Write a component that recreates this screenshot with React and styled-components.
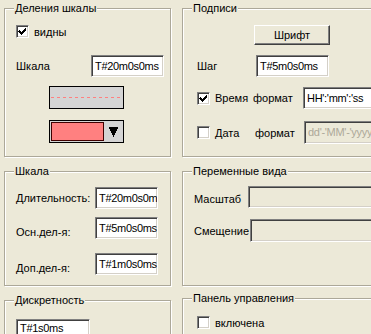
import React from "react";
import styled, { createGlobalStyle } from "styled-components";

const BG = "#ECE9D8";

const GlobalStyle = createGlobalStyle`
  html, body { margin: 0; padding: 0; background: ${BG}; }
  body {
    font-family: "Liberation Sans", Arial, sans-serif;
    font-size: 11px;
    color: #000;
    overflow: hidden;
  }
`;

const Page = styled.div`
  width: 371px;
  height: 334px;
  overflow: hidden;
  box-sizing: border-box;
  padding: 8px 0 0 4px;
  display: grid;
  grid-template-columns: 167px 200px;
  column-gap: 11px;
  align-items: start;
`;

const Column = styled.div`
  display: flex;
  flex-direction: column;
`;

const Group = styled.section`
  position: relative;
  box-sizing: border-box;
  height: ${(p) => p.$h}px;
  margin-top: ${(p) => p.$mt || 0}px;
  border: 1px solid #aca899;
  box-shadow: inset 1px 1px 0 #fff, 1px 1px 0 #fff;
  padding: ${(p) => p.$pad};
  display: flex;
  flex-direction: column;
  align-items: flex-start;
`;

const Title = styled.span`
  position: absolute;
  top: -8px;
  left: 9px;
  padding: 0 1px;
  background: ${BG};
  line-height: 15px;
  white-space: nowrap;
`;

const Row = styled.div`
  display: flex;
  align-items: ${(p) => p.$align || "center"};
  margin-top: ${(p) => p.$mt || 0}px;
  height: ${(p) => (p.$h ? `${p.$h}px` : "auto")};
`;

const Label = styled.span`
  display: inline-block;
  width: ${(p) => (p.$w ? `${p.$w}px` : "auto")};
  margin-top: ${(p) => p.$dy || 0}px;
  white-space: nowrap;
  flex: none;
`;

const Input = styled.div`
  box-sizing: border-box;
  width: ${(p) => p.$w}px;
  height: ${(p) => p.$h || 22}px;
  flex: none;
  border: 1px solid;
  border-color: #808080 #fff #fff #808080;
  box-shadow: inset 1px 1px 0 #404040, inset -1px -1px 0 #d4d0c8;
  background: ${(p) => (p.$disabled ? BG : "#fff")};
  color: ${(p) => (p.$muted ? "#aca899" : "#000")};
  font-size: 11px;
  letter-spacing: -0.3px;
  line-height: 16px;
  padding: ${(p) => p.$pt ?? 2}px 0 0 3px;
  white-space: nowrap;
  overflow: hidden;
`;

const CheckWrap = styled.span`
  display: flex;
  align-items: center;
  flex: none;
  width: ${(p) => (p.$w ? `${p.$w}px` : "auto")};
`;

const CheckBoxBox = styled.span`
  box-sizing: border-box;
  width: 13px;
  height: 13px;
  flex: none;
  border: 1px solid;
  border-color: #808080 #fff #fff #808080;
  box-shadow: inset 1px 1px 0 #404040, inset -1px -1px 0 #d4d0c8;
  background: #fff;
  display: flex;
  align-items: center;
  justify-content: center;
`;

const CheckText = styled.span`
  margin-left: 5px;
  white-space: nowrap;
`;

const Check = ({ checked, w, children }) => (
  <CheckWrap $w={w}>
    <CheckBoxBox>
      {checked && (
        <svg width="9" height="9" viewBox="0 0 9 9" shapeRendering="crispEdges">
          <path
            d="M1 3h1v1h1v1h1v-1h1v-1h1v-1h1v-1h1v3h-1v1h-1v1h-1v1h-1v1h-1v-1h-1v-1h-1v-1h-1z"
            fill="#000"
          />
        </svg>
      )}
    </CheckBoxBox>
    <CheckText>{children}</CheckText>
  </CheckWrap>
);

const LinePreview = styled.div`
  box-sizing: border-box;
  width: 75px;
  height: 23px;
  margin-left: ${(p) => p.$ml}px;
  margin-top: ${(p) => p.$mt}px;
  border: 1px solid #000;
  background: #d4d4d4;
  display: flex;
  align-items: center;
  padding: 0 1px;
`;

const Dashes = styled.div`
  width: 100%;
  height: 1px;
  background: repeating-linear-gradient(90deg, #ff8080 0 3px, transparent 3px 6px);
`;

const ColorPicker = styled.div`
  box-sizing: border-box;
  width: 75px;
  height: 23px;
  margin-left: ${(p) => p.$ml}px;
  margin-top: ${(p) => p.$mt}px;
  border: 1px solid #000;
  background: #d4d4d4;
  display: flex;
  align-items: center;
  padding: 1px;
`;

const Swatch = styled.div`
  box-sizing: border-box;
  width: 53px;
  height: 19px;
  border: 1px solid #400000;
  background: ${(p) => p.$color};
`;

const ArrowCell = styled.div`
  flex: 1;
  display: flex;
  justify-content: center;
  align-items: center;
`;

const Button = styled.div`
  box-sizing: border-box;
  width: 76px;
  height: 20px;
  margin-left: ${(p) => p.$ml}px;
  border: 1px solid;
  border-color: #fff #404040 #404040 #fff;
  box-shadow: inset -1px -1px 0 #808080;
  background: ${BG};
  display: flex;
  align-items: center;
  justify-content: center;
  line-height: 14px;
`;

export default function App() {
  return (
    <>
      <GlobalStyle />
      <Page>
        <Column>
          <Group $h={149} $pad="16px 0 0 11px">
            <Title>Деления шкалы</Title>
            <Row $h={13}>
              <Check checked>видны</Check>
            </Row>
            <Row $mt={17}>
              <Label $w={75}>Шкала</Label>
              <Input $w={73}>T#20m0s0ms</Input>
            </Row>
            <LinePreview $ml={33} $mt={9}>
              <Dashes />
            </LinePreview>
            <ColorPicker $ml={33} $mt={11}>
              <Swatch $color="#ff8080" />
              <ArrowCell>
                <svg width="9" height="10" viewBox="0 0 9 10" shapeRendering="crispEdges">
                  <path d="M0 0h9v2h-1v2h-1v2h-1v2h-1v2h-1v-2h-1v-2h-1v-2h-1v-2h-1z" fill="#000" />
                </svg>
              </ArrowCell>
            </ColorPicker>
          </Group>
          <Group $mt={14} $h={115} $pad="15px 0 0 11px">
            <Title>Шкала</Title>
            <Row>
              <Label $w={79}>Длительность:</Label>
              <Input $w={63}>T#20m0s0m</Input>
            </Row>
            <Row $mt={8} $align="flex-start">
              <Label $w={79} $dy={9}>Осн.дел-я:</Label>
              <Input $w={63}>T#5m0s0ms</Input>
            </Row>
            <Row $mt={14} $align="flex-start">
              <Label $w={79} $dy={9}>Доп.дел-я:</Label>
              <Input $w={63}>T#1m0s0ms</Input>
            </Row>
          </Group>
          <Group $mt={14} $h={60} $pad="18px 0 0 11px">
            <Title>Дискретность</Title>
            <Input $w={74} $pt={0}>T#1s0ms</Input>
          </Group>
        </Column>

        <Column>
          <Group $h={149} $pad="16px 0 0 14px">
            <Title>Подписи</Title>
            <Button $ml={57}>Шрифт</Button>
            <Row $mt={10}>
              <Label $w={59}>Шаг</Label>
              <Input $w={73}>T#5m0s0ms</Input>
            </Row>
            <Row $mt={10}>
              <Check checked w={56}>Время</Check>
              <Label $w={50}>формат</Label>
              <Input $w={80}>HH':'mm':'ss</Input>
            </Row>
            <Row $mt={12}>
              <Check w={58}>Дата</Check>
              <Label $w={49}>формат</Label>
              <Input $w={80} $h={23} $disabled $muted>dd'-'MM'-'yyyy</Input>
            </Row>
          </Group>
          <Group $mt={14} $h={115} $pad="14px 0 0 11px">
            <Title>Переменные вида</Title>
            <Row>
              <Label $w={54} $dy={3}>Масштаб</Label>
              <Input $w={140} $disabled />
            </Row>
            <Row $mt={11}>
              <Label $w={56}>Смещение</Label>
              <Input $w={140} $h={23} $disabled />
            </Row>
          </Group>
          <Group $mt={12} $h={60} $pad="17px 0 0 14px">
            <Title>Панель управления</Title>
            <Row $h={13}>
              <Check>включена</Check>
            </Row>
          </Group>
        </Column>
      </Page>
    </>
  );
}
